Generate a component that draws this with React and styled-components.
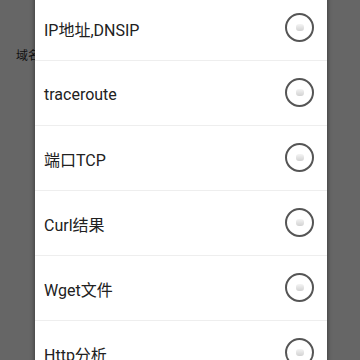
import React from "react";
import styled, { createGlobalStyle } from "styled-components";

const GlobalStyle = createGlobalStyle`
  html, body {
    margin: 0;
    padding: 0;
    background: #ffffff;
    font-family: Roboto, "Noto Sans CJK SC", sans-serif;
  }
`;

const options = [
  "IP地址,DNSIP",
  "traceroute",
  "端口TCP",
  "Curl结果",
  "Wget文件",
  "Http分析",
];

const App = () => {
  return (
    <StyledScreen>
      <GlobalStyle />
      <StyledPage>
        <StyledLabel>域名</StyledLabel>
      </StyledPage>
      <StyledOverlay>
        <StyledDialog>
          {options.map((name) => (
            <StyledRow key={name}>
              <StyledRowText>{name}</StyledRowText>
              <StyledRadio>
                <StyledRadioDot />
              </StyledRadio>
            </StyledRow>
          ))}
        </StyledDialog>
      </StyledOverlay>
    </StyledScreen>
  );
};

const StyledScreen = styled.div`
  position: relative;
  width: 360px;
  height: 360px;
  overflow: hidden;
  background: #ffffff;
`;

const StyledPage = styled.div`
  padding: 45px 0 0 16px;
`;

const StyledLabel = styled.span`
  font-size: 12px;
  color: #333333;
`;

const StyledOverlay = styled.div`
  position: absolute;
  inset: 0;
  display: flex;
  align-items: flex-start;
  padding: 0 33px 0 35px;
  background: rgba(0, 0, 0, 0.6);
`;

const StyledDialog = styled.div`
  flex: 1;
  margin-top: -4px;
  background: #ffffff;
  box-shadow: 0 0 4px 1px rgba(0, 0, 0, 0.35);
`;

const StyledRow = styled.div`
  height: 64px;
  display: flex;
  align-items: center;
  justify-content: space-between;
  padding: 0 13px 0 9px;
  border-bottom: 1px solid #eeeeee;
`;

const StyledRowText = styled.span`
  font-size: 16px;
  color: #212121;
  padding-top: 2px;
`;

const StyledRadio = styled.div`
  box-sizing: border-box;
  width: 29px;
  height: 29px;
  border: 2px solid #555555;
  border-radius: 50%;
  display: flex;
  align-items: center;
  justify-content: center;
  margin-top: -2px;
`;

const StyledRadioDot = styled.div`
  width: 8px;
  height: 7px;
  border-radius: 3px;
  background: linear-gradient(#f4f4f4, #d2d2d2);
`;

export default App;
